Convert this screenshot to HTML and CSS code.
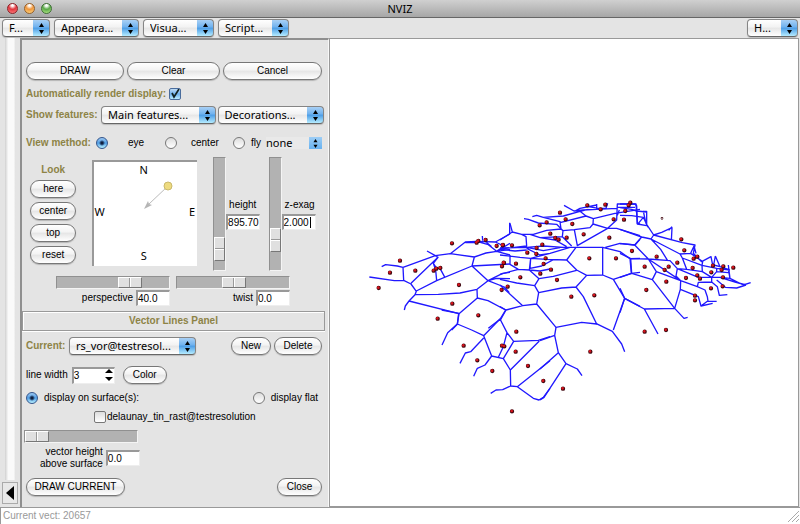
FILE: index.html
```html
<!DOCTYPE html>
<html lang="en">
<head>
<meta charset="utf-8">
<title>NVIZ</title>
<link rel="stylesheet" href="styles.css">
</head>
<body>
<svg width="0" height="0" class="defs" aria-hidden="true">
  <symbol id="updown" viewBox="0 0 7 11"><path d="M3.5 0L6 4H1zM3.5 11L6 7H1z"/></symbol>
</svg>

<header class="titlebar">
  <div class="lights"><i class="light red"></i><i class="light amber"></i><i class="light green"></i></div>
  <h1>NVIZ</h1>
  <div></div>
</header>

<nav class="menubar">
  <span class="popup file"><select aria-label="File"><option>F...</option></select><svg><use href="#updown"/></svg></span>
  <span class="popup appearance"><select aria-label="Appearance"><option>Appeara...</option></select><svg><use href="#updown"/></svg></span>
  <span class="popup visualize"><select aria-label="Visualize"><option>Visua...</option></select><svg><use href="#updown"/></svg></span>
  <span class="popup script"><select aria-label="Scripting"><option>Script...</option></select><svg><use href="#updown"/></svg></span>
  <span class="popup help"><select aria-label="Help"><option>H...</option></select><svg><use href="#updown"/></svg></span>
</nav>

<main class="workspace">
  <div class="rail">
    <div class="rail-track"></div>
    <button class="collapse" aria-label="Collapse panel"><svg viewBox="0 0 8 14"><path d="M8 0V14L0 7z"/></svg></button>
  </div>

  <section class="panel">
    <div class="row actions">
      <button class="pill">DRAW</button><button class="pill">Clear</button><button class="pill">Cancel</button>
    </div>
    <div class="row auto">
      <label class="head" for="auto">Automatically render display:</label><input type="checkbox" id="auto" checked>
    </div>
    <div class="row features">
      <span class="head">Show features:</span>
      <span class="popup"><select aria-label="Main features"><option>Main features...</option></select><svg><use href="#updown"/></svg></span>
      <span class="popup"><select aria-label="Decorations"><option>Decorations...</option></select><svg><use href="#updown"/></svg></span>
    </div>
    <div class="row view">
      <span class="head">View method:</span>
      <label class="eye"><input type="radio" name="view" checked>eye</label>
      <label class="mid"><input type="radio" name="view">center</label>
      <label class="fly"><input type="radio" name="view">fly</label>
      <span class="popup flat"><select aria-label="Fly mode"><option>none</option></select><svg><use href="#updown"/></svg></span>
    </div>

    <div class="row position">
      <div class="look">
        <span class="head">Look</span>
        <button class="pill">here</button><button class="pill">center</button><button class="pill">top</button><button class="pill">reset</button>
      </div>
      <div class="compass">
        <span class="n">N</span><span class="w">W</span>
        <svg viewBox="0 0 30 30"><path d="M25 5L6 23" stroke="#bbb" fill="none"/><path d="M1 28L5 20L6 23L9 24z" fill="#b5b5b5"/><circle cx="25" cy="5" r="4" fill="#eedb80" stroke="#c9b96c"/></svg>
        <span class="e">E</span><span class="s">S</span>
      </div>
      <input type="range" class="vertical" id="height-range" value="90" aria-label="Height slider">
      <div class="field"><label for="height">height</label><input type="text" id="height" value="895.70"></div>
      <input type="range" class="vertical" id="exag-range" value="79" aria-label="Z exaggeration slider">
      <div class="field"><label for="exag">z-exag</label><input type="text" id="exag" class="caret" value="2.000"></div>
    </div>

    <div class="row lens">
      <input type="range" value="69" aria-label="Perspective slider">
      <input type="range" value="51" aria-label="Twist slider">
      <div class="value"><label for="persp">perspective</label><input type="text" id="persp" value="40.0"></div>
      <div class="value"><label for="twist">twist</label><input type="text" id="twist" value="0.0"></div>
    </div>

    <h2>Vector Lines Panel</h2>

    <div class="row current">
      <label class="head" for="current">Current:</label>
      <span class="popup"><select id="current"><option>rs_vor@testresol...</option></select><svg><use href="#updown"/></svg></span>
      <button class="pill new">New</button><button class="pill delete">Delete</button>
    </div>
    <div class="row line">
      <label for="linewidth">line width</label>
      <span class="spin"><input type="text" id="linewidth" value="3"><svg viewBox="0 0 8 12"><path d="M4 0L8 4H0zM4 12L8 8H0z"/></svg></span>
      <button class="pill color">Color</button>
    </div>
    <div class="row display">
      <label><input type="radio" name="display" checked>display on surface(s):</label>
      <label><input type="radio" name="display">display flat</label>
    </div>
    <div class="row surface">
      <input type="checkbox" id="surface"><label for="surface">delaunay_tin_rast@testresolution</label>
    </div>
    <div class="row offset"><input type="range" value="0" aria-label="Vector height slider"></div>
    <div class="row above">
      <label for="vheight">vector height<br>above surface</label><input type="text" id="vheight" value="0.0">
    </div>
    <div class="row footer">
      <button class="pill drawcurrent">DRAW CURRENT</button><button class="pill close">Close</button>
    </div>
  </section>

  <section class="canvas">
    <svg viewBox="0 0 1404 1398" preserveAspectRatio="xMinYMin meet" role="img" aria-label="Voronoi diagram on surface">
      <g class="lines">
        <path transform="translate(90 453)" d="M28 261L103 272L131 271L153 282L169 304L165 314L147 333L136 348L133 360M65 230L77 224L112 228L129 232L131 271M129 232L226 197L271 191L316 156L350 154L406 156L450 132M201 183L226 197L234 202L153 280M169 303L230 272L336 228L343 201L271 191M234 202L220 220L227 240L230 272M220 220L232 238M240 235L255 263M165 314L235 313L300 309L351 298L384 272L336 228L450 222M343 201L378 189L410 184L450 195M351 298L352 324L297 371L147 333M297 371L292 403L275 420M352 324L384 332L437 360L420 388L385 415M316 158L350 158M367 138L368 152M350 154L385 164L410 184M378 156L395 170M406 156L432 168L410 184L450 160M410 184L450 178M449 98V132M384 272L428 250L450 247M384 272L410 265L450 266M384 272L433 291L448 308"/>
        <path transform="translate(510 453)" d="M30 100L37 126L65 133L100 133L140 121L183 117L189 122L223 119L270 113L279 102M0 150L37 126M65 133L78 140L80 168L0 177M90 133L120 143L165 150L200 170M120 143L187 140M72 86L85 88L115 99L170 103L189 122L187 140L215 168M97 80L110 76L130 82L190 78L240 64L258 78L280 86L279 102L323 115L232 167L223 119M130 82L180 95L183 117M180 98L258 78M192 46L222 63L250 60L290 58L350 55M240 64L265 58M280 86L345 70L420 58M0 174L80 172L130 168L190 172L228 172L308 172V255L260 256L228 291L185 294L116 308L104 287L50 279L0 268M228 172L200 210L230 240L260 256M308 172L360 185L390 206L394 250L340 268L308 255M340 268L374 325L340 420M374 325L420 349M228 291L250 320L290 402L245 397L168 412L110 342L116 308M110 342L68 347L18 360L0 392M68 347L0 285M18 360L0 350M104 287L117 266L160 259L230 241M117 266L88 240L55 238L0 253M88 240L92 205L140 208L200 210M30 195V223L55 238M0 195L60 202L92 205L150 190L210 172M92 205L90 235L125 228L160 209M80 172L130 182L180 173M80 175L120 195L150 190M0 178L45 183L80 180M88 240L120 243L150 237M323 115L350 115L420 137M323 115L350 90L352 42L408 42L412 100L420 102M352 52H405M352 76L358 60M225 63L240 55L290 45L290 58M265 50L295 55L318 55L323 40M290 42V56M316 172L360 160L405 165L420 148M390 206L420 205M394 250L420 247"/>
        <path transform="translate(870 453)" d="M0 42H45L50 47L52 102L80 107V64H70L78 100L101 135M0 53L35 58L50 63L80 66M0 76L35 77L70 82L55 100M70 82L84 112M101 135L125 127L156 113L154 153M146 121L156 110M101 135L187 158L225 165L220 190L245 215L273 200L278 225M212 190L222 168L228 190M0 118L65 141L93 147L101 135M65 141L44 165L0 161M44 165L85 207L109 245L97 269L164 355L181 298L182 272L109 245M0 190L32 206L85 207L150 212L172 236L168 258L182 272M32 206L35 250L97 269M35 250L0 262M0 295L14 325L73 357L164 355L192 385L203 382M14 325L0 368M73 357L114 432M93 147L122 178L143 212M93 147L180 192L212 190L248 215L246 226M180 192L187 204L200 238L172 236M187 204L246 226L247 245L200 238M85 207L182 272L232 290L235 277L275 276L292 290L298 316L322 314M172 236L235 262L275 262L275 276M181 298L235 320L243 348L278 340M232 290L255 300L262 320L264 334L290 334M262 334L243 348M286 198L281 225L300 230L286 198M246 226L290 235L330 240M325 225L330 265L370 285L392 278M300 230L325 238L330 265L300 262L275 262M247 245L275 262L290 245L325 248M290 235V245M290 270L316 292L350 294L378 285M300 262L345 276L378 285"/>
        <path transform="translate(210 813)" d="M125 0L176 10L172 42L143 68L126 105M172 42L215 60L251 77L300 27L321 68L341 94L415 91L450 80M251 77L275 138L310 146L331 180L332 228L352 230M251 84L212 125L196 129L180 160M275 138L255 165L232 175L221 199M321 68L310 110L295 142M341 94L310 146M418 93L331 180M332 228L308 239L288 240L272 250M352 230L450 152M352 230L400 265L417 270L430 262L450 235"/>
        <path transform="translate(630 753)" d="M48 112L44 136L0 152M44 136L55 188L0 237M55 188L78 221L112 237L126 257M78 221L12 322L0 330M169 101L217 124L245 162L254 185"/>
      </g>
      <g class="shade">
        <g id="sites">
          <path transform="translate(90 453)" d="M276 160h0M120 212h0M90 248h0M56 294h0M166 242h0M221 242h0M229 236h0M241 234h0M297 285h0M277 341h0M355 376h0M233 386h0M355 153h0M350 158h0M377 150h0M410 168h0M429 165h0M432 219h0M426 229h0M425 300h0M443 290h0"/>
          <path transform="translate(510 453)" d="M180 68h0M197 88h0M217 102h0M262 46h0M316 44h0M302 58h0M391 38h0M386 46h0M376 63h0M341 88h0M372 89h0M119 106h0M140 97h0M151 131h0M166 144h0M176 149h0M200 143h0M251 133h0M328 143h0M396 183h0M268 205h0M348 205h0M8 166h0M36 166h0M110 174h0M127 164h0M82 188h0M109 192h0M137 205h0M131 222h0M11 218h0M48 221h0M153 239h0M121 251h0M61 262h0M171 270h0M214 320h0M283 316h0"/>
          <path transform="translate(870 453)" d="M184 148h0M193 181h0M110 200h0M74 230h0M146 230h0M134 240h0M172 218h0M139 275h0M79 300h0M74 425h0M138 420h0M221 206h0M232 200h0M218 234h0M279 227h0M310 229h0M340 233h0M305 240h0M274 247h0M198 264h0M232 256h0M240 266h0M309 262h0M308 289h0M273 295h0M225 317h0M225 331h0"/>
          <path transform="translate(210 813)" d="M191 107h0M232 151h0M277 183h0M349 65h0M306 107h0M313 109h0M347 125h0M384 168h0M430 213h0M336 304h0"/>
          <path transform="translate(630 753)" d="M151 185h0M69 296h0"/>
        </g>
        <circle cx="996" cy="538" r="1"/>
      </g>
      <use href="#sites" class="shine" x="-1" y="-1"/>
    </svg>
  </section>
</main>

<footer class="status"><span>Current vect: 20657</span><svg viewBox="0 0 12 12"><path d="M1 12L12 1M5 12L12 5M9 12L12 9"/></svg></footer>
</body>
</html>
```
FILE: styles.css
```css
* { box-sizing: border-box; }

body {
  margin: 0;
  height: 100vh;
  display: flex;
  flex-direction: column;
  background: #e4e4e4;
  color: #000;
  font: 10px/12px "Liberation Sans", Arial, sans-serif;
}

.defs { position: absolute; }

input, select, button {
  margin: 0;
  font: inherit;
  color: inherit;
  appearance: none;
}

/* Window chrome */
.titlebar {
  display: grid;
  grid-template-columns: 1fr auto 1fr;
  align-items: center;
  height: 18px;
  flex: none;
  background: linear-gradient(#d0d0d0, #a6a6a6);
  border-bottom: 1px solid #666;
}
.titlebar h1 { margin: 0; font: 11px/16px "Noto Sans", sans-serif; }
.lights { display: flex; gap: 6px; padding-left: 7px; }
.light { width: 11px; height: 11px; border-radius: 50%; border: 1px solid #555; }
.red { background: radial-gradient(circle at 50% 15%, #fff 0 10%, #e2343c 45%, #ff8a8a); border-color: #8b2228; }
.amber { background: radial-gradient(circle at 50% 15%, #fff 0 10%, #f0953a 45%, #ffe08a); border-color: #96602a; }
.green { background: radial-gradient(circle at 50% 15%, #fff 0 10%, #58a846 45%, #c0f090); border-color: #3e6e35; }

.menubar {
  display: flex;
  gap: 4px;
  height: 20px;
  flex: none;
  padding: 1px 2px;
}
.file { width: 48px; }
.appearance { width: 85px; }
.visualize { width: 71px; }
.script { width: 71px; }
.help { width: 51px; margin-left: auto; }

/* Pop-up menus */
.popup { display: grid; align-items: center; height: 18px; }
.popup select, .popup svg { grid-area: 1 / 1; }
.popup select {
  width: 100%;
  height: 18px;
  padding: 0 16px 0 6px;
  border: 1px solid #858585;
  border-bottom-color: #666;
  border-radius: 4px;
  background:
    linear-gradient(#a9d0f5, #6eb1ee 45%, #4b9ce6 50%, #b5ecff) right / 16px 100% no-repeat,
    linear-gradient(#fff, #f2f2f2 45%, #e6e6e6 50%, #fff);
  font: 11px/16px "Noto Sans", sans-serif;
  box-shadow: 0 1px 1px #bbb;
}
.popup svg { justify-self: end; width: 7px; height: 11px; margin-right: 5px; pointer-events: none; }

/* Push buttons */
.pill {
  height: 18px;
  padding: 0;
  border: 1px solid #777;
  border-radius: 9px;
  background: linear-gradient(#fff, #f3f3f3 45%, #e5e5e5 50%, #fff);
  box-shadow: 0 1px 1px #b5b5b5;
  line-height: 14px;
}

/* Toggles */
[type="radio"], [type="checkbox"] {
  flex: none;
  width: 12px;
  height: 12px;
  border: 1px solid #777;
  background: linear-gradient(#ddd, #fff);
}
[type="radio"] { border-radius: 50%; }
[type="checkbox"] { border-radius: 2px; }
[type="radio"]:checked {
  border-color: #33558c;
  background: radial-gradient(circle, #102040 0 1px, transparent 3px), linear-gradient(#9cc8f2, #4f9de4 50%, #b8f0ff);
}
[type="checkbox"]:checked {
  border-color: #4a6c9c;
  background: url("data:image/svg+xml,%3Csvg xmlns='http://www.w3.org/2000/svg' viewBox='0 0 10 10'%3E%3Cpath d='M2 4L4 8L9 0' fill='none' stroke='%23122' stroke-width='1.7'/%3E%3C/svg%3E"), linear-gradient(#c0dcf6, #6eb0ec 50%, #b8ecff);
}

/* Sunken entry boxes */
[type="text"] {
  width: 34px;
  height: 16px;
  padding: 0;
  border: solid;
  border-width: 2px 1px 1px 2px;
  border-color: #999 #eee #eee #999;
  border-radius: 0;
  background: #fff;
  outline: 0;
}
.caret { background: linear-gradient(#000, #000) 26px 1px / 1px 11px no-repeat #fff; }

/* Scales */
[type="range"] {
  width: 114px;
  height: 13px;
  background: #b2b2b2;
  border: 1px solid;
  border-color: #909090 #f4f4f4 #f4f4f4 #909090;
}
[type="range"]::-webkit-slider-thumb {
  appearance: none;
  width: 24px;
  height: 11px;
  border: 1px solid;
  border-color: #fff #777 #777 #fff;
  background: linear-gradient(90deg, #e0e0e0 10px, #999 10px 11px, #fff 11px 12px, #e0e0e0 12px);
}
.vertical { writing-mode: vertical-lr; width: 13px; height: 114px; }
.vertical::-webkit-slider-thumb {
  width: 11px;
  height: 24px;
  background: linear-gradient(#e0e0e0 10px, #999 10px 11px, #fff 11px 12px, #e0e0e0 12px);
}

/* Left rail */
.workspace { display: flex; flex: 1; min-height: 0; }
.rail { width: 20px; flex: none; display: flex; flex-direction: column; align-items: center; padding-bottom: 3px; }
.rail-track { flex: 1; width: 11px; background: linear-gradient(90deg, #d0d0d0, #fafafa 30% 80%, #ddd); }
.collapse {
  display: grid;
  place-items: center;
  width: 16px;
  height: 22px;
  margin-top: 2px;
  padding: 0;
  border: 1px solid #aaa;
  background: #e8e8e8;
}
.collapse svg { width: 8px; height: 14px; }

/* Control panel */
.panel {
  width: 309px;
  flex: none;
  padding: 22px 4px 0;
  border: solid #8f8f8f;
  border-width: 2px 0 0 2px;
  border-right: 1px solid #f8f8f8;
}
.row { display: flex; align-items: center; }
.head, h2 { color: #8d8346; font-size: 10px; font-weight: bold; }
label { white-space: nowrap; }
.actions { display: grid; grid-template-columns: 98fr 93fr 99fr; gap: 3px; padding: 0 2px 0 0; }
.auto { height: 16px; margin-top: 6px; gap: 3px; }
.features { height: 18px; margin-top: 4px; gap: 2px; }
.features .head { width: 73px; }
.features .popup { flex: 114; }
.features .popup + .popup { flex: 106; }

.view { height: 14px; margin-top: 12px; }
.view .head { width: 70px; }
.view label { display: flex; align-items: center; }
.eye { gap: 20px; width: 69px; }
.mid { gap: 14px; width: 68px; }
.fly { gap: 6px; width: 33px; }
.flat { flex: 1; padding-right: 2px; }
.popup.flat select {
  height: 12px;
  padding-left: 0;
  border: 0;
  border-radius: 0;
  box-shadow: none;
  line-height: 12px;
  background: linear-gradient(#9ccdf5, #68b2f0) right / 13px 100% no-repeat, #e9e9e9;
}
.popup.flat svg { height: 9px; margin-right: 3px; }

.position { align-items: flex-start; height: 113px; margin-top: 7px; }
.look { display: flex; flex-direction: column; gap: 4px; width: 67px; padding: 7px 16px 0 4px; text-align: center; }
.compass {
  display: grid;
  grid-template-columns: 16px 1fr 20px;
  grid-template-rows: 16px 1fr 20px;
  place-items: center;
  width: 106px;
  height: 106px;
  margin: 3px 16px 0 0;
  border: solid #999;
  border-width: 2px 0 0 2px;
  background: #fff;
  font: 11px/14px "Noto Sans", sans-serif;
}
.n { grid-column: 2; }
.w { grid-area: 2 / 1; justify-self: start; }
.e { grid-area: 2 / 3; justify-self: end; padding-right: 2px; }
.s { grid-area: 3 / 2; }
.compass svg { width: 30px; height: 30px; grid-area: 2 / 2; place-self: start end; margin: 3px 4px; }
.field { display: flex; flex-direction: column; gap: 3px; width: 43px; padding-top: 42px; }
.field label { padding-left: 3px; }

.lens { display: grid; grid-template-columns: 114px 114px; column-gap: 6px; row-gap: 1px; margin: 6px 0 0 30px; }
.value { display: flex; align-items: center; justify-content: flex-end; gap: 3px; }

h2 {
  margin: 5px -1px 0 -4px;
  border: 1px solid #999;
  line-height: 18px;
  text-align: center;
  box-shadow: 0 1px #fff, inset 1px 1px #fff;
}

.current { height: 18px; margin-top: 6px; padding-right: 2px; }
.current .head { width: 43px; }
.current .popup { width: 127px; }
.new { width: 40px; margin-left: auto; }
.delete { width: 48px; margin-left: 3px; }

.line { height: 18px; margin-top: 11px; gap: 4px; }
.spin { display: grid; align-items: center; width: 43px; }
.spin > * { grid-area: 1 / 1; }
.spin [type="text"] { width: 100%; height: 17px; }
.spin svg { justify-self: end; width: 8px; height: 12px; margin-right: 2px; pointer-events: none; }
.color { width: 44px; margin-left: 4px; }

.display { justify-content: space-between; height: 14px; margin-top: 7px; padding-right: 6px; }
.display label { display: flex; align-items: center; gap: 6px; }
.surface { height: 14px; margin: 5px 0 0 68px; gap: 1px; }
.offset { height: 13px; margin: 6px 0 0 -2px; }
.above { height: 24px; margin: 3px 0 0 14px; gap: 3px; text-align: right; }
.footer { justify-content: space-between; margin-top: 8px; padding-right: 2px; }
.drawcurrent { width: 99px; }
.close { width: 45px; }

/* Map view */
.canvas { flex: 1; min-width: 0; margin-right: 1px; background: #fff; border: 1px solid #999; }
.canvas svg { display: block; width: 100%; height: 100%; }
.lines { fill: none; stroke: #2018ff; stroke-width: 4; stroke-linejoin: round; }
.shade, .shine { fill: none; stroke-linecap: round; }
.shade { stroke: #400810; stroke-width: 13; }
.shade circle { stroke-width: 6; }
.shine { stroke: #d8141c; stroke-width: 8; }

/* Status line */
.status {
  display: flex;
  justify-content: space-between;
  align-items: center;
  height: 17px;
  flex: none;
  padding: 0 1px 0 2px;
  border: solid #999;
  border-width: 1px 0 0 1px;
  background: #fff;
  color: #999;
}
.status svg { width: 12px; height: 12px; fill: none; stroke: #aaa; }
```
